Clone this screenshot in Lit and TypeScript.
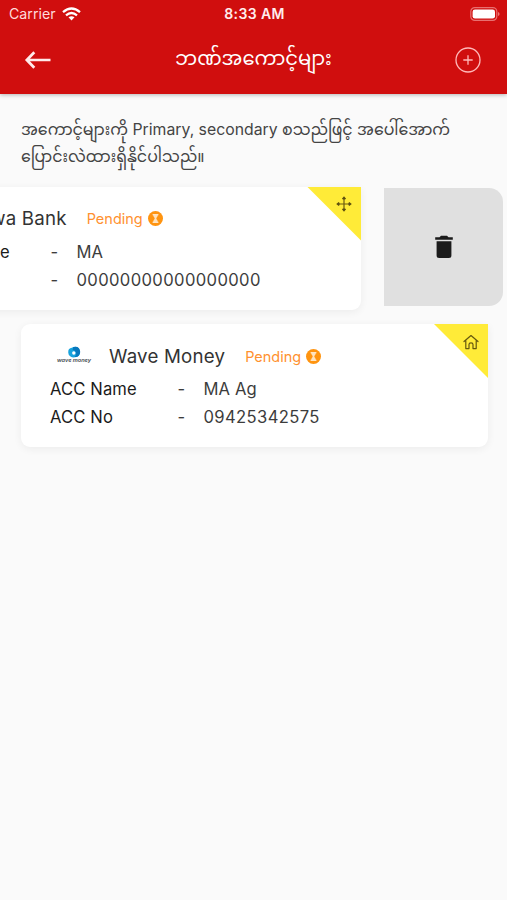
import { LitElement, html, css, svg } from "lit";
import { customElement, property } from "lit/decorators.js";

const hourglass = html`<svg width="15" height="15" viewBox="0 0 15 15">
  <circle cx="7.5" cy="7.5" r="7.5" fill="#ff9410" />
  <path d="M4.6 3.7h5.8M4.6 11.3h5.8" stroke="#fff" stroke-width="1.1" />
  <path d="M5.2 4h4.6c0 1.8-1.5 2.7-1.5 3.5s1.5 1.7 1.5 3.5H5.2c0-1.8 1.5-2.7 1.5-3.5S5.2 5.8 5.2 4z" fill="#ffe2bd" />
</svg>`;

const move = svg`<path d="M8 2v12M2 8h12" fill="none" stroke="#6b5b10" stroke-width="1.2"/>
  <path fill="#5d4f10" d="M8 .2l2.100 2.500L9 3.600H7L5.900 2.700zM8 15.800l2.100-2.500L9 12.400H7l-1.100.9zM.2 8l2.500-2.100.9 1.100v2l-.9 1.100zM15.800 8l-2.500-2.100-.9 1.100v2l.9 1.100z"/>`;

const home = svg`<path fill="none" stroke="#65580f" stroke-width="1.2" stroke-linejoin="round" stroke-linecap="round"
  d="M1 7.500L8 1.500l7 6M2.800 6.500v8.100h3.200v-4.200q0-1.500 2-1.500t2 1.500v4.200h3.200V6.500"/>`;

const waveLogo = html`<svg class="logo" viewBox="0 0 48 20">
  <path d="M18.300 6q-.3-3.500 3.500-4.200 3.500-2 6 0 2.600 1.700 1.700 5 .2 3.500-3 4.200-3.800 1.200-6-.5-2.600-1.500-2.200-4.500z" fill="#18a3dd" />
  <path d="M23 1.200q4-1.200 6 1 2.200 3.500.3 6.800-2 2.800-4.800 1.800 2.600-2 1.300-4.800-1.300-2.200-3.300-2 .8-1 .5-2.800z" fill="#0878bd" />
  <circle cx="23.800" cy="7" r="1.700" fill="#fff" />
  <text x="7" y="15.900" textLength="34" lengthAdjust="spacingAndGlyphs" font-family="Inter, sans-serif"
    font-size="5.2" font-weight="600" font-style="italic" fill="#41464c">wave money</text>
</svg>`;

@customElement("account-card")
class AccountCard extends LitElement {
  @property() bank = "";
  @property() holder = "";
  @property() number = "";
  @property() kind: "home" | "move" = "home";

  static styles = css`
    :host { display: block; position: relative; width: 467px; height: 123px; flex: none; box-sizing: border-box;
      background: #fff; border-radius: 9px; border-top-right-radius: 0; padding: 17px 0 0 29px;
      box-shadow: 0 2px 9px rgba(0, 0, 0, 0.06); }
    .top { display: flex; align-items: center; height: 30px; white-space: nowrap; }
    .logo { width: 48px; height: 20px; margin-right: 11px; flex: none; }
    .blank { width: 39.5px; flex: none; }
    .name { font-size: 18.7px; color: #333; letter-spacing: 0.2px; }
    .pending { font-size: 14.5px; color: #ff9130; margin: 0 5px 0 20px; }
    .top svg { flex: none; }
    .row { display: grid; grid-template-columns: 127.5px 26px 1fr; height: 28px; line-height: 28px;
      font-size: 16.6px; color: #3c3c3c; letter-spacing: 0.12px; }
    .row:nth-child(2) { margin-top: 4px; }
    .row span:first-child { color: #1b1b1b; }
    .row .number { letter-spacing: 0.37px; }
    .corner { position: absolute; right: 0; top: 0; width: 54px; height: 54px; background: #ffeb38;
      clip-path: polygon(0 0, 100% 0, 100% 100%); }
    .corner svg { position: absolute; right: 9.5px; top: 9.5px; }
  `;

  render() {
    return html`
      <div class="top">
        ${this.kind === "home" ? waveLogo : html`<span class="blank"></span>`}
        <span class="name">${this.bank}</span>
        <span class="pending">Pending</span>${hourglass}
      </div>
      <div class="row"><span>ACC Name</span><span>-</span><span>${this.holder}</span></div>
      <div class="row"><span>ACC No</span><span>-</span><span class="number">${this.number}</span></div>
      <div class="corner"><svg width="16" height="16" viewBox="0 0 16 16">${this.kind === "home" ? home : move}</svg></div>
    `;
  }
}

@customElement("app-root")
class AppRoot extends LitElement {
  static styles = css`
    :host { display: block; height: 900px; overflow: hidden; background: #fafafa;
      font-family: Inter, "Noto Sans Myanmar", "Noto Sans", sans-serif; }
    header { height: 94px; box-sizing: border-box; background: #d00e0e; color: #fff; box-shadow: 0 1px 4px rgba(0, 0, 0, 0.28); }
    .status { display: grid; grid-template-columns: 1fr auto 1fr; align-items: center; height: 27px; padding: 0 7px 0 9px; }
    .carrier { display: flex; align-items: center; gap: 6px; font-size: 14.2px; color: #ffdada; }
    .time { font-size: 14px; font-weight: 600; color: #ffecec; letter-spacing: 0.4px; }
    .battery { justify-self: end; }
    .bar { display: grid; grid-template-columns: 28px 1fr 28px; align-items: center; height: 66px; padding: 0 25px 0 24px; }
    h1 { margin: 0; font-size: 19.5px; font-weight: 400; text-align: center; white-space: nowrap; line-height: 30px; padding: 0 0 4px 1px; }
    p { margin: 0; padding: 22px 20px 0 21px; height: 92.5px; box-sizing: border-box; font-size: 15.8px; line-height: 27px; color: #444; white-space: nowrap; }
    .swipe { display: flex; align-items: flex-start; margin-left: -106px; height: 137.5px; }
    .delete { width: 119px; height: 118px; margin: 1.5px 0 0 23px; border-radius: 0 14px 14px 0; background: #e0e0e0;
      display: flex; align-items: center; justify-content: center; flex: none; }
    .list { display: flex; flex-direction: column; }
    .list > account-card { margin-left: 21px; }
  `;

  render() {
    return html`
      <header>
        <div class="status">
          <div class="carrier">Carrier
            <svg width="19" height="14" viewBox="0 0 19 14" fill="none" stroke="#fff" stroke-width="2.3">
              <path d="M1 5.200Q9.500-2.200 18 5.200" /><path d="M4 8.400Q9.500 3.700 15 8.400" />
              <path d="M9.500 13.400L6.500 10.300Q9.500 8 12.500 10.300z" fill="#fff" stroke="none" />
            </svg>
          </div>
          <div class="time">8:33 AM</div>
          <svg class="battery" width="30" height="14" viewBox="0 0 30 14">
            <rect x=".8" y=".6" width="26" height="12.8" rx="4" fill="none" stroke="#e87070" stroke-width="1.2" />
            <rect x="2.6" y="2.4" width="22.4" height="9.2" rx="2.4" fill="#fff" />
            <path d="M28 5q1.600.6 1.600 2T28 9z" fill="#e77" />
          </svg>
        </div>
        <div class="bar">
          <svg width="28" height="20" viewBox="0 0 28 20" fill="none" stroke="#ffeaea" stroke-width="2.7">
            <path d="M26.500 10H3M10.300 2.200L2.800 10l7.500 7.800" />
          </svg>
          <h1>ဘဏ်အကောင့်များ</h1>
          <svg width="28" height="28" viewBox="0 0 28 28" fill="none" stroke="#ffb9b9" stroke-width="1.3">
            <circle cx="14" cy="14" r="12" /><path d="M14 9.300v9.400M9.300 14h9.400" />
          </svg>
        </div>
      </header>
      <p>အကောင့်များကို Primary, secondary စသည်ဖြင့် အပေါ်အောက်<br />ပြောင်းလဲထားရှိနိုင်ပါသည်။</p>
      <div class="list">
        <div class="swipe">
          <account-card bank="Innwa Bank" holder="MA" number="00000000000000000" kind="move"></account-card>
          <div class="delete">
            <svg width="20" height="24" viewBox="0 0 20 24" fill="#1b1b1b">
              <path d="M1.200 2.200h4.300L7 .8h6l1.500 1.400h4.300v2.600H1.200zM2.600 6.300h14.800v14.200q0 2.500-2.500 2.500H5.100q-2.500 0-2.500-2.500z" />
            </svg>
          </div>
        </div>
        <account-card bank="Wave Money" holder="MA Ag" number="09425342575" kind="home"></account-card>
      </div>
    `;
  }
}
